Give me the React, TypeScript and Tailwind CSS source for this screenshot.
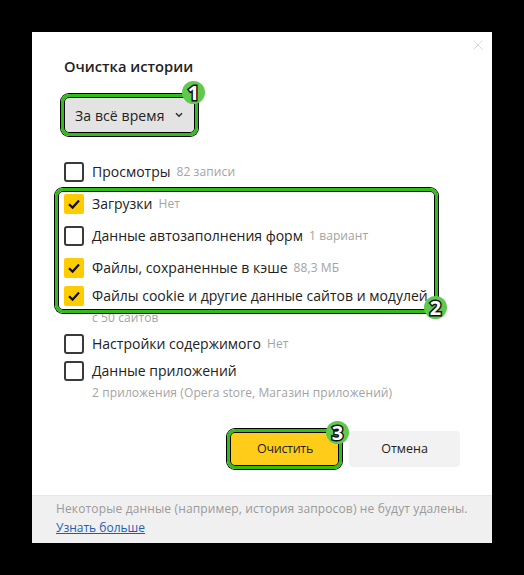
const font = { fontFamily: '"Open Sans", "Noto Sans", sans-serif' }

function Check({ on }: { on?: boolean }) {
  if (on) {
    return (
      <span className="flex size-5 shrink-0 items-center justify-center rounded-[2px] bg-[#ffcc00]">
        <svg viewBox="0 0 20 20" className="size-5" fill="none">
          <path d="M5 10.2 8.6 13.6 15 6.6" stroke="#111" strokeWidth="2.2" />
        </svg>
      </span>
    )
  }
  return <span className="size-5 shrink-0 rounded-[3px] border-2 border-[#3a3a3a] bg-white" />
}

function Row({ on, label, note, className }: { on?: boolean; label: string; note?: string; className: string }) {
  return (
    <div className={`flex items-center gap-[8px] ${className}`}>
      <Check on={on} />
      <span className="whitespace-nowrap text-[14px] leading-5 text-[#222]">{label}</span>
      {note && <span className="-ml-[2px] whitespace-nowrap text-[12px] leading-5 tracking-[0.1px] text-[#a3a3a3]">{note}</span>}
    </div>
  )
}

function Badge({ n, className }: { n: number; className: string }) {
  return (
    <span className={`absolute flex size-[23px] items-center justify-center rounded-full bg-[#5fc94f] text-[20px] leading-none font-bold text-white [-webkit-text-stroke:3px_#111] [paint-order:stroke_fill] ${className}`}>
      {n}
    </span>
  )
}

export default function App() {
  return (
    <div style={font} className="h-[575px] w-[524px] overflow-hidden bg-black pt-8 pl-8">
      <div className="relative flex h-[511px] w-[460px] flex-col bg-white">
        <svg viewBox="0 0 10 10" className="absolute top-[8px] left-[441px] size-[10px]" fill="none">
          <path d="M0.5 0.5 9.5 9.5M9.5 0.5 0.5 9.5" stroke="#d8d8d8" strokeWidth="1" />
        </svg>

        <div className="flex flex-1 flex-col px-8 pt-[23px]">
          <h2 className="text-[14.7px] leading-[22px] font-semibold text-[#222]">Очистка истории</h2>

          <div className="mt-[20px] flex h-9 w-[131px] -translate-x-[1px] items-center gap-[10px] rounded-[4px] bg-[#e3e3e3] pl-[12px]">
            <span className="whitespace-nowrap text-[14px] tracking-[0.1px] text-[#222]">За всё время</span>
            <svg viewBox="0 0 8 6" className="h-[6px] w-[8px]" fill="none">
              <path d="M1 1.2 4 4.2 7 1.2" stroke="#333" strokeWidth="1.6" />
            </svg>
          </div>

          <Row label="Просмотры" note="82 записи" className="mt-[29px]" />
          <Row on label="Загрузки" note="Нет" className="mt-[12px]" />
          <Row label="Данные автозаполнения форм" note="1 вариант" className="mt-[12px]" />
          <Row on label="Файлы, сохраненные в кэше" note="88,3 МБ" className="mt-[12px]" />
          <Row on label="Файлы cookie и другие данные сайтов и модулей" className="mt-[8px]" />
          <p className="mt-[2px] pl-[28px] text-[12px] leading-5 tracking-[0.1px] text-[#a3a3a3]">с 50 сайтов</p>
          <Row label="Настройки содержимого" note="Нет" className="mt-[6px]" />
          <Row label="Данные приложений" className="mt-[7px]" />
          <p className="mt-[2px] pl-[28px] text-[12px] leading-5 tracking-[0.1px] text-[#a3a3a3]">
            2 приложения (Opera store, Магазин приложений)
          </p>

          <div className="mt-[28px] flex justify-end gap-2">
            <button type="button" className="h-9 w-[112px] rounded-[4px] bg-[#ffcc1a] text-[12.5px] tracking-[-0.3px] text-[#222]">
              Очистить
            </button>
            <button type="button" className="h-9 w-[111px] rounded-[4px] bg-[#f2f2f2] text-[12.5px] text-[#222]">
              Отмена
            </button>
          </div>
        </div>

        <div className="h-[48px] border-t border-[#e6e6e6] bg-[#f0f0f0] px-6 pt-[3px] text-[12px] leading-[19px]">
          <p className="whitespace-nowrap tracking-[0.14px] text-[#9a9a9a]">
            Некоторые данные (например, история запросов) не будут удалены.
          </p>
          <a className="text-[#1a5fb4] underline">Узнать больше</a>
        </div>

        {/* annotation frames */}
        <div className="absolute top-[62px] left-[29px] h-[42px] w-[137px] rounded-[8px] border-[3px] border-[#2fbe18] shadow-[0_0_0_1px_#000,inset_0_0_0_1px_#000]" />
        <Badge n={1} className="top-[49px] left-[150px]" />
        <div className="absolute top-[156px] left-[23px] h-[125px] w-[383px] rounded-[8px] border-[3px] border-[#2fbe18] shadow-[0_0_0_1px_#000,inset_0_0_0_1px_#000]" />
        <Badge n={2} className="top-[264px] left-[392px]" />
        <div className="absolute top-[397px] left-[195px] h-[40px] w-[115px] rounded-[8px] border-[3px] border-[#2fbe18] shadow-[0_0_0_1px_#000,inset_0_0_0_1px_#000]" />
        <Badge n={3} className="top-[389px] left-[294px]" />
      </div>
    </div>
  )
}
